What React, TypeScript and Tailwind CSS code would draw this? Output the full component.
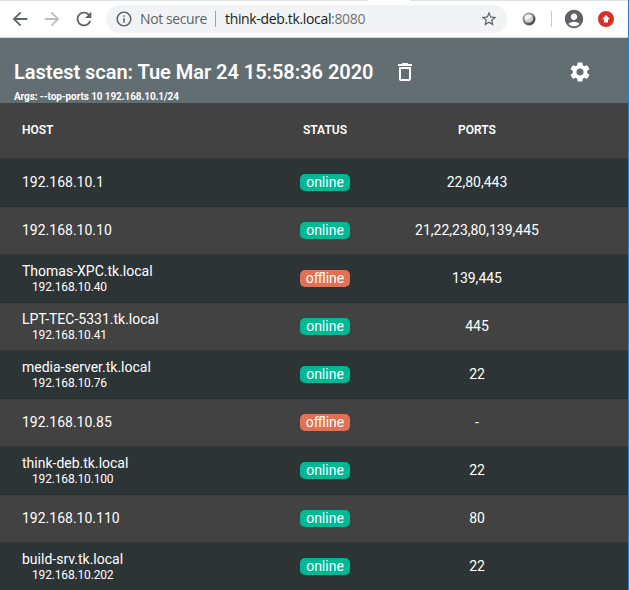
import { MdAccountCircle, MdArrowBack, MdArrowForward, MdDeleteOutline, MdInfoOutline, MdRefresh, MdSettings, MdStarBorder } from 'react-icons/md';

type Host = { name: string; ip?: string; online: boolean; ports: string };

const hosts: Host[] = [
  { name: '192.168.10.1', online: true, ports: '22,80,443' },
  { name: '192.168.10.10', online: true, ports: '21,22,23,80,139,445' },
  { name: 'Thomas-XPC.tk.local', ip: '192.168.10.40', online: false, ports: '139,445' },
  { name: 'LPT-TEC-5331.tk.local', ip: '192.168.10.41', online: true, ports: '445' },
  { name: 'media-server.tk.local', ip: '192.168.10.76', online: true, ports: '22' },
  { name: '192.168.10.85', online: false, ports: '-' },
  { name: 'think-deb.tk.local', ip: '192.168.10.100', online: true, ports: '22' },
  { name: '192.168.10.110', online: true, ports: '80' },
  { name: 'build-srv.tk.local', ip: '192.168.10.202', online: true, ports: '22' },
];

function BrowserBar() {
  return (
    <div className="flex h-[38px] flex-col border-b border-[#d5d7da] bg-white font-['Open_Sans',sans-serif]">
      <div className="flex h-px shrink-0 bg-[#dee1e6]">
        <div className="ml-[368px] w-[42px] bg-white" />
      </div>
      <div className="flex h-9 items-center pl-[9px] text-[#5f6368]">
        <MdArrowBack className="size-[22px] shrink-0" />
        <MdArrowForward className="ml-[10px] size-[22px] shrink-0 text-[#babcbe]" />
        <MdRefresh className="ml-[10px] size-[22px] shrink-0" />
        <div className="ml-[11px] flex h-7 w-[401px] shrink-0 items-center rounded-full bg-[#f1f3f4] pl-[9px] text-[14px] leading-7">
          <MdInfoOutline className="size-[18px] shrink-0" />
          <span className="ml-[7px] w-[75px] tracking-[-0.4px] whitespace-nowrap">Not secure</span>
          <span className="h-4 w-px bg-[#9aa0a6]" />
          <span className="ml-[9px] tracking-[-0.34px] whitespace-nowrap text-[#202124]">
            think-deb.tk.local<span className="text-[#6f7377]">:8080</span>
          </span>
          <MdStarBorder className="mr-[9px] ml-auto size-[18px] shrink-0" />
        </div>
        <svg className="ml-[15px] size-[14px] shrink-0" viewBox="0 0 14 14">
          <defs>
            <linearGradient id="ring" x1="0" y1="0" x2="1" y2="1">
              <stop offset="0.2" stopColor="#a0a0a0" />
              <stop offset="0.8" stopColor="#484848" />
            </linearGradient>
          </defs>
          <circle cx="7" cy="7" r="6.5" fill="url(#ring)" />
          <circle cx="6.7" cy="6.4" r="4.1" fill="#f2f2f2" />
          <path d="M3 8.2Q8 8 10 3.6Q12 7 9 9.6Q5.5 11.5 3 8.2Z" fill="#cfcfcf" />
        </svg>
        <div className="ml-[15px] h-4 w-px shrink-0 bg-[#c8cacd]" />
        <MdAccountCircle className="ml-[11px] size-[22px] shrink-0" />
        <svg className="ml-[13px] size-4 shrink-0" viewBox="0 0 16 16">
          <circle cx="8" cy="8" r="8" fill="#d93025" />
          <path d="M8 4L12 8.3H10V11.5H6V8.3H4Z" fill="white" />
        </svg>
      </div>
    </div>
  );
}

export default function App() {
  return (
    <div className="flex h-[590px] w-[629px] flex-col overflow-hidden border-r border-[#1883d7] bg-[#424242] font-[Roboto,sans-serif] text-white">
      <BrowserBar />
      <header className="flex h-[65px] shrink-0 flex-col bg-[#636e72] pl-[14px]">
        <div className="flex h-12 items-end">
          <h1 className="w-[379px] text-[20px] leading-7 font-semibold tracking-[-0.03px] whitespace-nowrap">Lastest scan: Tue Mar 24 15:58:36 2020</h1>
          <MdDeleteOutline className="mb-[2px] size-6" />
          <MdSettings className="mb-[2px] ml-[151px] size-6" />
        </div>
        <p className="mt-[5px] text-[10px] leading-3 font-bold tracking-[-0.1px]">Args: --top-ports 10 192.168.10.1/24</p>
      </header>
      <div className="grid h-14 shrink-0 grid-cols-[254px_98px_206px] items-center border-b border-[#393939] pb-[2px] pl-[22px] text-center text-[12px] font-semibold">
        <span className="text-left">HOST</span>
        <span>STATUS</span>
        <span>PORTS</span>
      </div>
      {hosts.map((host) => (
        <div
          key={host.name}
          className="grid h-12 shrink-0 grid-cols-[254px_98px_206px] items-center border-b border-[#393939] pl-[22px] text-center text-[14px] even:border-[#272d2f] even:bg-[#2d3436]"
        >
          <div className={`text-left ${host.ip ? 'leading-4' : 'pb-px leading-5'}`}>
            {host.name}
            {host.ip && <div className="pl-[10px] text-[12px] tracking-[-0.16px]">{host.ip}</div>}
          </div>
          <span className={`mx-auto h-[17px] w-[50px] rounded-[5px] leading-[17px] ${host.online ? 'bg-[#00b894]' : 'bg-[#e17055]'}`}>
            {host.online ? 'online' : 'offline'}
          </span>
          <span>{host.ports}</span>
        </div>
      ))}
    </div>
  );
}
